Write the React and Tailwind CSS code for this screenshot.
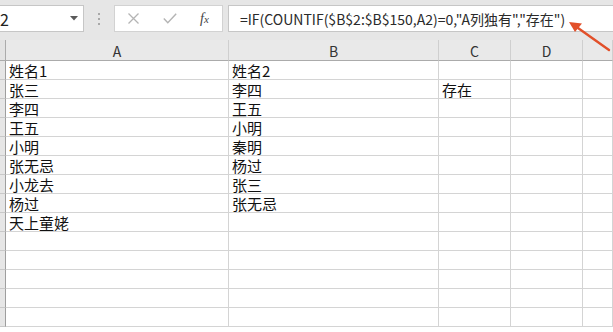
import React from "react";

const rows = [
  ["姓名1", "姓名2", ""],
  ["张三", "李四", "存在"],
  ["李四", "王五", ""],
  ["王五", "小明", ""],
  ["小明", "秦明", ""],
  ["张无忌", "杨过", ""],
  ["小龙去", "张三", ""],
  ["杨过", "张无忌", ""],
  ["天上童姥", "", ""],
  ["", "", ""],
  ["", "", ""],
  ["", "", ""],
  ["", "", ""],
  ["", "", ""],
];

const font = { fontFamily: '"Noto Sans CJK SC", "Noto Sans", sans-serif' };

export default function App() {
  return (
    <div
      className="relative w-[613px] h-[332px] overflow-hidden bg-white text-[#1a1a1a]"
      style={font}
    >
      {/* toolbar */}
      <div className="flex h-[40px] bg-[#e6e6e6] pt-[5px]">
        <div className="w-[84px] h-[27px] bg-white border border-l-0 border-[#c6c6c6] flex items-center justify-between shrink-0">
          <span className="text-[16px] leading-none text-[#222]">2</span>
          <svg width="8" height="5" viewBox="0 0 8 5" className="mr-[5px]">
            <polygon points="0,0 8,0 4,4.5" fill="#5a5a5a" />
          </svg>
        </div>
        <div className="w-[30px] h-[27px] flex flex-col items-center justify-center gap-[3px] shrink-0">
          <div className="w-[2px] h-[2px] bg-[#a8a8a8]" />
          <div className="w-[2px] h-[2px] bg-[#a8a8a8]" />
          <div className="w-[2px] h-[2px] bg-[#a8a8a8]" />
        </div>
        <div className="w-[109px] h-[27px] bg-white border border-[#d2d2d2] flex items-center shrink-0">
          <svg width="11" height="11" viewBox="0 0 11 11" className="ml-[13px]">
            <path d="M0.5 0.5 L10.5 10.5 M10.5 0.5 L0.5 10.5" stroke="#b4b4b4" strokeWidth="1.3" />
          </svg>
          <svg width="14" height="11" viewBox="0 0 14 11" className="ml-[24px]">
            <path d="M0.8 5.5 L4.8 9.8 L13.2 0.8" stroke="#b4b4b4" strokeWidth="1.4" fill="none" />
          </svg>
          <span
            className="ml-[23px] text-[14px] italic leading-none text-[#444]"
            style={{ fontFamily: '"Liberation Serif", "DejaVu Serif", serif' }}
          >
            f<span className="text-[11px]">x</span>
          </span>
        </div>
        <div className="ml-[5px] flex-1 h-[27px] bg-white border border-r-0 border-[#c6c6c6] flex items-center pl-[11px] overflow-hidden">
          <span className="text-[14px] leading-[18px] whitespace-nowrap text-[#2a2a2a]">
            =IF(COUNTIF($B$2:$B$150,A2)=0,"A列独有","存在")
          </span>
        </div>
      </div>

      {/* grid */}
      <div className="grid grid-cols-[6px_223px_210px_72px_72px_1fr]">
        {/* header */}
        <div className="h-[21px] bg-[#e3e3e3] border-r border-b border-[#ababab]" />
        {["A", "B", "C", "D", ""].map((c, i) => (
          <div
            key={i}
            className="h-[21px] bg-[#e9e9e9] border-b border-b-[#ababab] border-r border-r-[#cfcfcf] flex items-end justify-center text-[14px] leading-[18px] text-[#333]"
          >
            {c}
          </div>
        ))}
        {rows.map((r, ri) => (
          <React.Fragment key={ri}>
            <div className="h-[19px] bg-[#e6e6e6] border-r border-r-[#9e9e9e] border-b border-b-[#c8c8c8]" />
            {[r[0], r[1], r[2], "", ""].map((v, ci) => (
              <div
                key={ci}
                className="h-[19px] border-r border-b border-[#d4d4d4] pl-[3px] pt-[1px] text-[15px] leading-[17px] whitespace-nowrap text-[#111]"
              >
                {v}
              </div>
            ))}
          </React.Fragment>
        ))}
      </div>

      {/* annotation arrow */}
      <svg
        className="absolute left-0 top-0 pointer-events-none"
        width="613"
        height="332"
        viewBox="0 0 613 332"
      >
        <line x1="609" y1="50" x2="578" y2="28" stroke="#e2502a" strokeWidth="2.4" strokeLinecap="round" />
        <polygon points="569,22 582,23.5 575,32" fill="#e2502a" />
      </svg>
    </div>
  );
}
